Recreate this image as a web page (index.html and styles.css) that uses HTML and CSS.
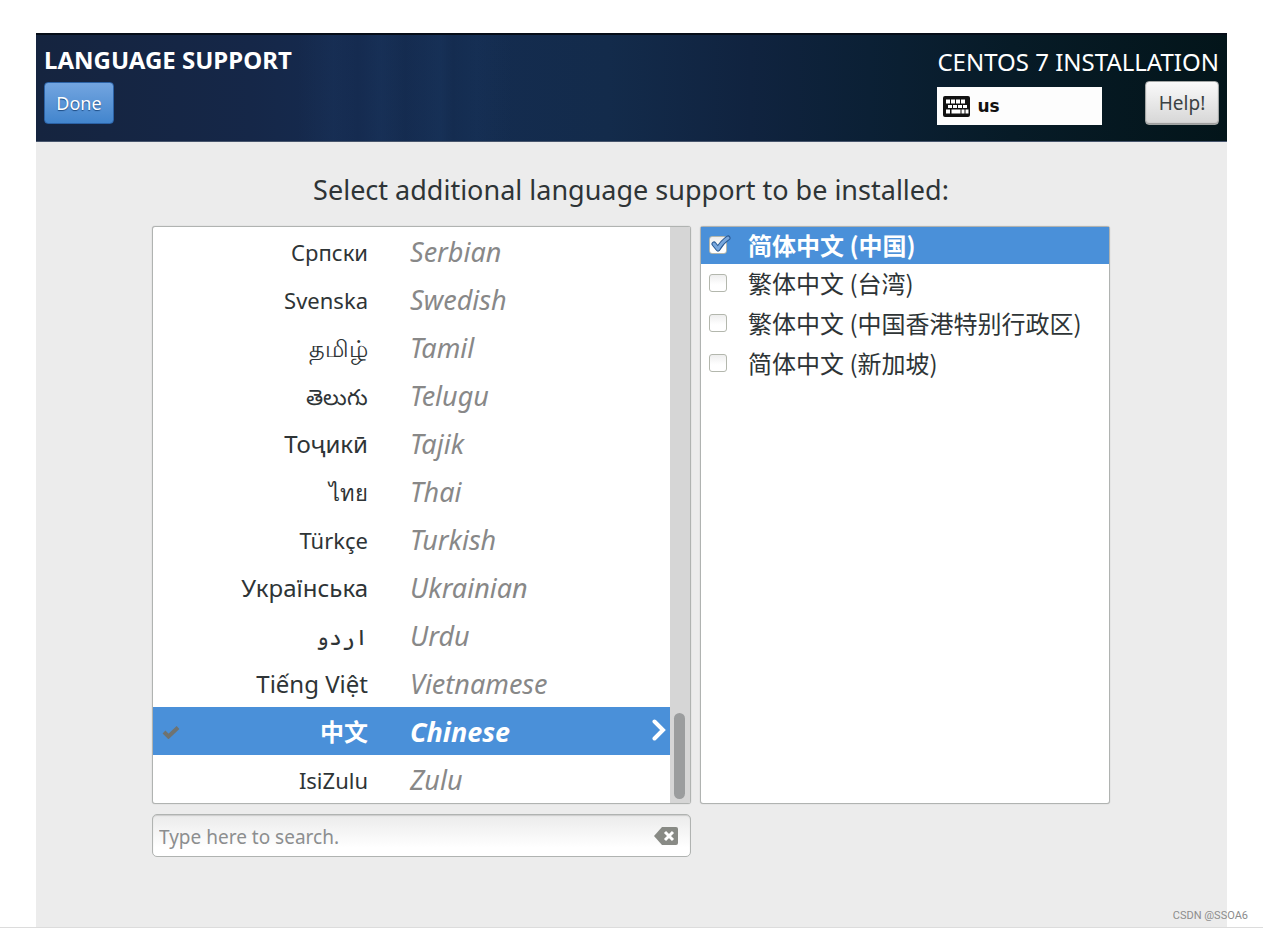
FILE: index.html
```html
<!DOCTYPE html>
<html lang="en">
<head>
<meta charset="utf-8">
<title>CentOS 7 Installation - Language Support</title>
<link rel="stylesheet" href="styles.css">
</head>
<body>
<div class="page">
<div class="installer">
  <header class="header">
    <div class="header-side">
      <h1 class="spoke-title">LANGUAGE SUPPORT</h1>
      <button class="btn btn-done" type="button">Done</button>
    </div>
    <div class="header-side header-right">
      <p class="product">CENTOS 7 INSTALLATION</p>
      <div class="header-tools">
        <div class="layout-indicator">
          <svg class="keyboard" viewBox="0 0 27 21" aria-hidden="true">
            <rect width="27" height="21" rx="2" fill="#111"/>
            <path d="M3 5.500h19" stroke="#fff" stroke-width="4" stroke-dasharray="4 1"/>
            <path d="M5 10.500h19" stroke="#fff" stroke-width="3" stroke-dasharray="4 1"/>
            <path d="M3 15.500h4M8.500 15.500h9M18.500 15.500h3M22.500 15.500h3" stroke="#fff" stroke-width="4"/>
          </svg>
          <span>us</span>
        </div>
        <button class="btn btn-help" type="button">Help!</button>
      </div>
    </div>
  </header>
  <main class="content">
    <h2 class="prompt">Select additional language support to be installed:</h2>
    <div class="columns">
      <div class="picker">
        <div class="panel language-panel">
          <ul class="languages">
            <li><button class="language" type="button"><span class="native" lang="sr">Српски</span><span class="english">Serbian</span></button></li>
            <li><button class="language" type="button"><span class="native" lang="sv">Svenska</span><span class="english">Swedish</span></button></li>
            <li><button class="language" type="button"><span class="native large" lang="ta">தமிழ்</span><span class="english">Tamil</span></button></li>
            <li><button class="language" type="button"><span class="native" lang="te">తెలుగు</span><span class="english">Telugu</span></button></li>
            <li><button class="language" type="button"><span class="native large" lang="tg">Тоҷикӣ</span><span class="english">Tajik</span></button></li>
            <li><button class="language" type="button"><span class="native" lang="th">ไทย</span><span class="english">Thai</span></button></li>
            <li><button class="language" type="button"><span class="native" lang="tr">Türkçe</span><span class="english">Turkish</span></button></li>
            <li><button class="language" type="button"><span class="native large" lang="uk">Українська</span><span class="english">Ukrainian</span></button></li>
            <li><button class="language" type="button"><span class="native" lang="ur" dir="rtl">اردو</span><span class="english">Urdu</span></button></li>
            <li><button class="language" type="button"><span class="native large" lang="vi">Tiếng Việt</span><span class="english">Vietnamese</span></button></li>
            <li><button class="language selected" type="button" aria-current="true">
              <svg class="row-check" viewBox="0 0 18 14" aria-hidden="true"><path d="M2 7l4.500 4.500L16 2.500" fill="none" stroke="#6f7371" stroke-width="4"/></svg>
              <span class="native large" lang="zh-CN">中文</span><span class="english">Chinese</span>
              <svg class="row-arrow" viewBox="0 0 14 22" aria-hidden="true"><path d="M2.500 2.500l8.500 8.500-8.500 8.500" fill="none" stroke="#fff" stroke-width="4" stroke-linecap="round"/></svg>
            </button></li>
            <li><button class="language" type="button"><span class="native" lang="zu">IsiZulu</span><span class="english">Zulu</span></button></li>
          </ul>
          <div class="scrollbar"><div class="thumb"></div></div>
        </div>
        <div class="search">
          <input class="search-input" type="text" placeholder="Type here to search." aria-label="Search languages">
          <button class="clear" type="button" aria-label="Clear search">
            <svg class="clear-icon" viewBox="0 0 24 18" aria-hidden="true"><path d="M8 0h14q2 0 2 2v14q0 2-2 2H8L0 9z" fill="#888a85"/><path d="M11 5l8 8M19 5l-8 8" stroke="#fff" stroke-width="3"/></svg>
          </button>
        </div>
      </div>
      <div class="panel locales">
        <label class="locale selected"><input class="box" type="checkbox" checked><svg class="box-tick" viewBox="0 0 22 18" aria-hidden="true"><path d="M5 9l4 5Q13 7 19 3" fill="none" stroke="#285993" stroke-width="5" stroke-linejoin="round" stroke-linecap="round"/><path d="M5 9l4 5Q13 7 19 3" fill="none" stroke="#78a7dd" stroke-width="3" stroke-linejoin="round" stroke-linecap="round"/></svg><span>简体中文 (中国)</span></label>
        <label class="locale"><input class="box" type="checkbox"><span>繁体中文 (台湾)</span></label>
        <label class="locale"><input class="box" type="checkbox"><span>繁体中文 (中国香港特别行政区)</span></label>
        <label class="locale"><input class="box" type="checkbox"><span>简体中文 (新加坡)</span></label>
      </div>
    </div>
  </main>
</div>
<footer class="credit">CSDN @SSOA6</footer>
</div>
</body>
</html>
```
FILE: styles.css
```css
* { box-sizing: border-box; }

body {
  margin: 0;
  background: #fff;
  color: #2e3436;
  font-family: "Noto Sans", "Open Sans", "Noto Sans CJK SC", sans-serif;
}

h1, h2, p, ul { margin: 0; padding: 0; }
ul { list-style: none; }
button, input { font: inherit; color: inherit; }

.page {
  position: relative;
  padding: 33px 36px 0;
  border-bottom: 1px solid #dcdcdc;
}

.installer { background: #ececec; }

.header {
  display: flex;
  justify-content: space-between;
  height: 109px;
  padding: 11px 8px 0;
  border-top: 2px solid #060d18;
  border-bottom: 1px solid #48566d;
  color: #fff;
  background:
    linear-gradient(90deg, #0000 22%, #2c5a9014 25%, #0000 27%, #2c5a9018 29%, #0000 31%, #2c5a9018 34%, #0000 35%, #2c5a9010 37%, #0000 40%),
    linear-gradient(90deg, #15243f 0%, #152748 18%, #152b50 27%, #142c50 36%, #132b4b 48%, #10233f 60%, #0b2035 70%, #071b27 82%, #03151a 100%);
}

.header-side {
  display: flex;
  flex-direction: column;
  align-items: flex-start;
  gap: 8px;
}

.spoke-title {
  font-size: 24px;
  line-height: 28px;
  font-weight: 700;
}

.product {
  font-size: 24px;
  line-height: 32px;
}

.header-right { align-items: stretch; gap: 2px; }

.header-tools {
  display: flex;
  align-items: center;
  justify-content: space-between;
}

.btn {
  border-radius: 4px;
  font-size: 18px;
  line-height: 24px;
  padding: 0;
}

.btn-done {
  width: 70px;
  height: 42px;
  border: 1px solid #2b62a6;
  background: linear-gradient(#73a5e0, #4285cd);
  text-shadow: 0 1px 1px #1c4a80;
}

.btn-help {
  width: 74px;
  height: 44px;
  border: 1px solid #a3a6a5;
  background: linear-gradient(#fafafa, #d6d6d6);
  box-shadow: inset 0 -1px 1px #999;
  color: #3b4143;
  font-size: 19px;
}

.layout-indicator {
  display: flex;
  align-items: center;
  gap: 7px;
  width: 165px;
  height: 38px;
  margin-top: 7px;
  padding: 0 6px;
  background: #fdfdfd;
  color: #111;
  font: 700 17px/24px "DejaVu Sans", sans-serif;
}

.keyboard { width: 27px; height: 21px; }

.content { padding: 29px 117px 70px 116px; }

.prompt {
  margin-bottom: 17px;
  font-size: 27px;
  line-height: 38px;
  font-weight: 400;
  text-align: center;
}

.columns {
  display: grid;
  grid-template-columns: 539fr 410fr;
  gap: 9px;
  align-items: start;
}

.picker {
  display: flex;
  flex-direction: column;
  gap: 10px;
}

.panel {
  border: 1px solid #b0b3b1;
  border-radius: 3px;
  background: #fff;
  box-shadow: 0 0 1px #aaa;
}

.language-panel { display: flex; }
.languages { flex: 1; }

.language {
  position: relative;
  display: grid;
  grid-template-columns: 215px 1fr;
  gap: 42px;
  align-items: center;
  width: 100%;
  height: 48px;
  border: 0;
  padding: 2px 0 0;
  background: none;
  text-align: left;
  line-height: 32px;
}

.native { font-size: 22px; text-align: right; }
.native.large { font-size: 24px; }

.native:dir(rtl) { text-align: left; justify-self: end; }

.english {
  font-size: 27px;
  font-style: italic;
  color: #888;
}

.selected { background: #4a90d9; color: #fff; font-weight: 700; }
.selected .english { color: #fff; }

.row-check { position: absolute; left: 9px; top: 18px; width: 18px; height: 14px; }
.row-arrow { position: absolute; right: 4px; top: 12px; width: 14px; height: 22px; }

.scrollbar {
  display: flex;
  align-items: flex-end;
  width: 20px;
  padding: 4px;
  background: #d6d6d6;
}

.thumb {
  width: 11px;
  height: 86px;
  border-radius: 6px;
  background: #9b9d9e;
}

.search {
  display: flex;
  align-items: center;
  height: 43px;
  padding: 0 12px 0 6px;
  border: 1px solid #b0b3b1;
  border-radius: 5px;
  background: linear-gradient(#ebebeb, #fff 80%);
  box-shadow: inset 0 1px 1px #ccc;
}

.search-input {
  flex: 1;
  min-width: 0;
  border: 0;
  padding: 2px 0 0;
  outline: 0;
  background: none;
  font-size: 19px;
  line-height: 26px;
}

.search-input::placeholder { color: #8c8e8f; opacity: 1; }

.clear { display: flex; border: 0; padding: 0; background: none; }
.clear-icon { width: 24px; height: 18px; }

.locales { align-self: start; height: 578px; }

.locale {
  position: relative;
  display: flex;
  align-items: center;
  gap: 21px;
  height: 40px;
  padding: 0 0 3px 8px;
  font-family: "Noto Sans CJK SC", sans-serif;
  font-size: 24px;
  line-height: 36px;
}

.locale.selected { height: 37px; padding-bottom: 2px; }

.box {
  appearance: none;
  width: 18px;
  height: 18px;
  margin: 0;
  border: 1px solid #b3b7ad;
  border-radius: 3px;
  background: linear-gradient(#eee, #fff 60%);
}

.box-tick { position: absolute; left: 8px; top: 8px; width: 22px; height: 18px; }

.credit {
  position: absolute;
  right: 15px;
  bottom: 2px;
  font: 11px/18px Roboto, Arial, sans-serif;
  color: #8c8c8c;
}
```
